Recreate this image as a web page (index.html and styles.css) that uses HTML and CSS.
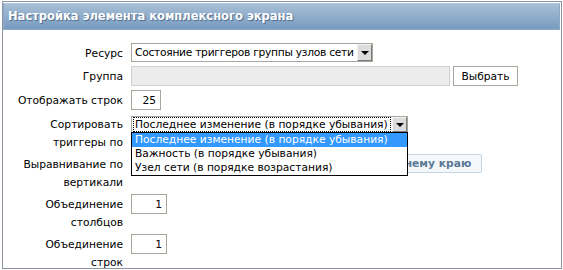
FILE: index.html
```html
<!DOCTYPE html>
<html lang="ru">
<head>
  <meta charset="UTF-8">
  <title>Настройка элемента комплексного экрана</title>
  <link rel="stylesheet" href="styles.css">
</head>
<body>
  <div class="screen">
    <div class="screen-header">Настройка элемента комплексного экрана</div>

    <div class="form">
      <!-- Resource -->
      <div class="form-label">Ресурс</div>
      <div class="form-field">
        <div class="select select-resource">
          <span class="select-value">Состояние триггеров группы узлов сети</span>
          <span class="select-arrow"></span>
        </div>
      </div>

      <!-- Group -->
      <div class="form-label">Группа</div>
      <div class="form-field">
        <input class="text-input input-group" type="text" readonly>
        <button class="btn" type="button">Выбрать</button>
      </div>

      <!-- Rows -->
      <div class="form-label">Отображать строк</div>
      <div class="form-field">
        <input class="text-input input-number" type="text" value="25">
      </div>

      <!-- Sort triggers -->
      <div class="form-label">Сортировать триггеры по</div>
      <div class="form-field">
        <div class="select select-sort focused">
          <span class="select-value">Последнее изменение (в порядке убывания)</span>
          <span class="select-arrow"></span>
          <ul class="select-list">
            <li class="selected">Последнее изменение (в порядке убывания)</li>
            <li>Важность (в порядке убывания)</li>
            <li>Узел сети (в порядке возрастания)</li>
          </ul>
        </div>
      </div>

      <!-- Vertical align -->
      <div class="form-label">Выравнивание по вертикали</div>
      <div class="form-field">
        <div class="btn-group">
          <button class="btn-radio" type="button">Наверху</button>
          <button class="btn-radio" type="button">Посередине</button>
          <button class="btn-radio active" type="button">По нижнему краю</button>
        </div>
      </div>

      <!-- Colspan -->
      <div class="form-label">Объединение столбцов</div>
      <div class="form-field">
        <input class="text-input input-span" type="text" value="1">
      </div>

      <!-- Rowspan -->
      <div class="form-label">Объединение строк</div>
      <div class="form-field">
        <input class="text-input input-span" type="text" value="1">
      </div>
    </div>
  </div>
</body>
</html>
```

FILE: styles.css
```css
/* General Styles */
body {
  margin: 0;
  font-family: "DejaVu Sans", Verdana, sans-serif;
  font-size: 10.7px;
  color: #000;
  background-color: #fff;
}

.screen {
  box-sizing: border-box;
  height: 268px;
  margin: 1px 1px 0 2px;
  padding: 1px 1px 0 0;
  border: 1px solid #8a95a1;
  overflow: hidden;
}

.screen-header {
  box-sizing: border-box;
  height: 27px;
  padding-left: 4px;
  line-height: 25px;
  border: 1px solid #8eaac8;
  border-top-color: #b3c7dc;
  background: linear-gradient(#a8bfd6, #789bc0);
  color: #fff;
  font-size: 11.5px;
  font-weight: bold;
  text-shadow: 1px 1px 1px #4a6a8e;
}

/* Form grid */
.form {
  display: grid;
  grid-template-columns: 120px 1fr;
  column-gap: 8px;
  margin-top: 11px;
}

.form-label {
  padding: 4px 0 0 14px;
  line-height: 18px;
  text-align: right;
}

.form-field {
  display: flex;
  align-items: flex-start;
  gap: 3px;
  padding: 2px 0;
}

.text-input {
  box-sizing: border-box;
  height: 20px;
  padding: 0 4px;
  border: 1px solid #a9a79b;
  background-color: #fff;
  font-family: inherit;
  font-size: 10.7px;
}

.input-group {
  width: 319px;
  border-color: #cfcfcf;
  background-color: #ececec;
}

.input-number {
  width: 30px;
  text-align: right;
}

.input-span {
  width: 36px;
  text-align: right;
}

.btn {
  box-sizing: border-box;
  height: 20px;
  width: 65px;
  padding: 0;
  border: 1px solid #aaa89e;
  background-color: #fff;
  font-family: inherit;
  font-size: 10.7px;
  color: #000;
}

/* Select boxes */
.select {
  position: relative;
  box-sizing: border-box;
  display: flex;
  height: 19px;
  border: 1px solid #a9a79b;
  background-color: #fff;
}

.select-resource {
  width: 242px;
  letter-spacing: -0.28px;
}

.select-sort {
  width: 277px;
  height: 17px;
  margin-top: 2px;
}

.select-value {
  flex: 1;
  padding-left: 3px;
  line-height: 17px;
  white-space: nowrap;
  overflow: hidden;
}

.select-sort .select-value {
  line-height: 15px;
}

.focused .select-value {
  margin: 0 1px 0 1px;
  padding-left: 2px;
  outline: 1px dotted #000;
  outline-offset: -1px;
}

.select-arrow {
  position: relative;
  width: 13px;
  border: 1px solid;
  border-color: #f4f4f4 #7a7a7a #7a7a7a #f4f4f4;
  background-color: #dcdcdc;
}

.select-arrow::after {
  content: "";
  position: absolute;
  left: 3px;
  top: 50%;
  margin-top: -2px;
  border-left: 4px solid transparent;
  border-right: 4px solid transparent;
  border-top: 4px solid #000;
}

/* Open dropdown list */
.select-list {
  position: absolute;
  top: 100%;
  left: -1px;
  z-index: 2;
  box-sizing: border-box;
  width: 277px;
  margin: 0;
  padding: 0;
  list-style: none;
  border: 1px solid #000;
  background-color: #fff;
  letter-spacing: 0;
}

.select-list li {
  height: 14px;
  padding-left: 3px;
  line-height: 14px;
  white-space: nowrap;
}

.select-list .selected {
  background-color: #3399ff;
  color: #fff;
}

/* Vertical align buttons */
.btn-group {
  display: flex;
  gap: 9px;
}

.btn-radio {
  box-sizing: border-box;
  height: 19px;
  padding: 0 17px;
  border: 1px solid #c6d5e4;
  border-radius: 2px;
  background-color: #f5f8fb;
  font-family: inherit;
  font-size: 10.7px;
  font-weight: bold;
  color: #5a7896;
}

.btn-radio.active {
  padding: 0 10px;
}
```
